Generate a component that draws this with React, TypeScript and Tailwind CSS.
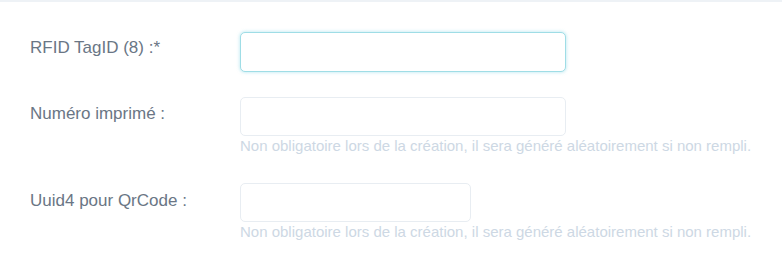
export default function App() {
  const help =
    "Non obligatoire lors de la création, il sera généré aléatoirement si non rempli.";

  return (
    <div className="w-[782px] h-[273px] bg-white font-['Liberation_Sans',Arial,sans-serif] overflow-hidden">
      <div className="h-[2px] bg-[#eef2f6]" />

      <div className="pt-[30px] pl-[30px] flex flex-col">
        {/* RFID */}
        <div className="flex items-start">
          <label className="w-[210px] text-[17px] leading-5 text-[#6a7685] pt-[6px]">
            RFID TagID (8) :*
          </label>
          <input
            type="text"
            className="w-[326px] h-[40px] rounded-[5px] border border-[#9fdde6] bg-white shadow-[0_0_3px_1px_rgba(120,210,225,0.35)] outline-none"
          />
        </div>

        {/* Numéro imprimé */}
        <div className="flex items-start mt-[25px]">
          <label className="w-[210px] text-[17px] leading-5 text-[#6a7685] pt-[7px]">
            Numéro imprimé :
          </label>
          <div className="flex flex-col">
            <input
              type="text"
              className="w-[326px] h-[39px] rounded-[5px] border border-[#e8edf2] bg-white outline-none"
            />
            <p className="text-[15px] leading-5 text-[#cdd8e4]">{help}</p>
          </div>
        </div>

        {/* Uuid4 */}
        <div className="flex items-start mt-[27px]">
          <label className="w-[210px] text-[17px] leading-5 text-[#6a7685] pt-[8px]">
            Uuid4 pour QrCode :
          </label>
          <div className="flex flex-col">
            <input
              type="text"
              className="w-[231px] h-[39px] rounded-[5px] border border-[#e8edf2] bg-white outline-none"
            />
            <p className="text-[15px] leading-5 text-[#cdd8e4]">{help}</p>
          </div>
        </div>
      </div>
    </div>
  );
}
